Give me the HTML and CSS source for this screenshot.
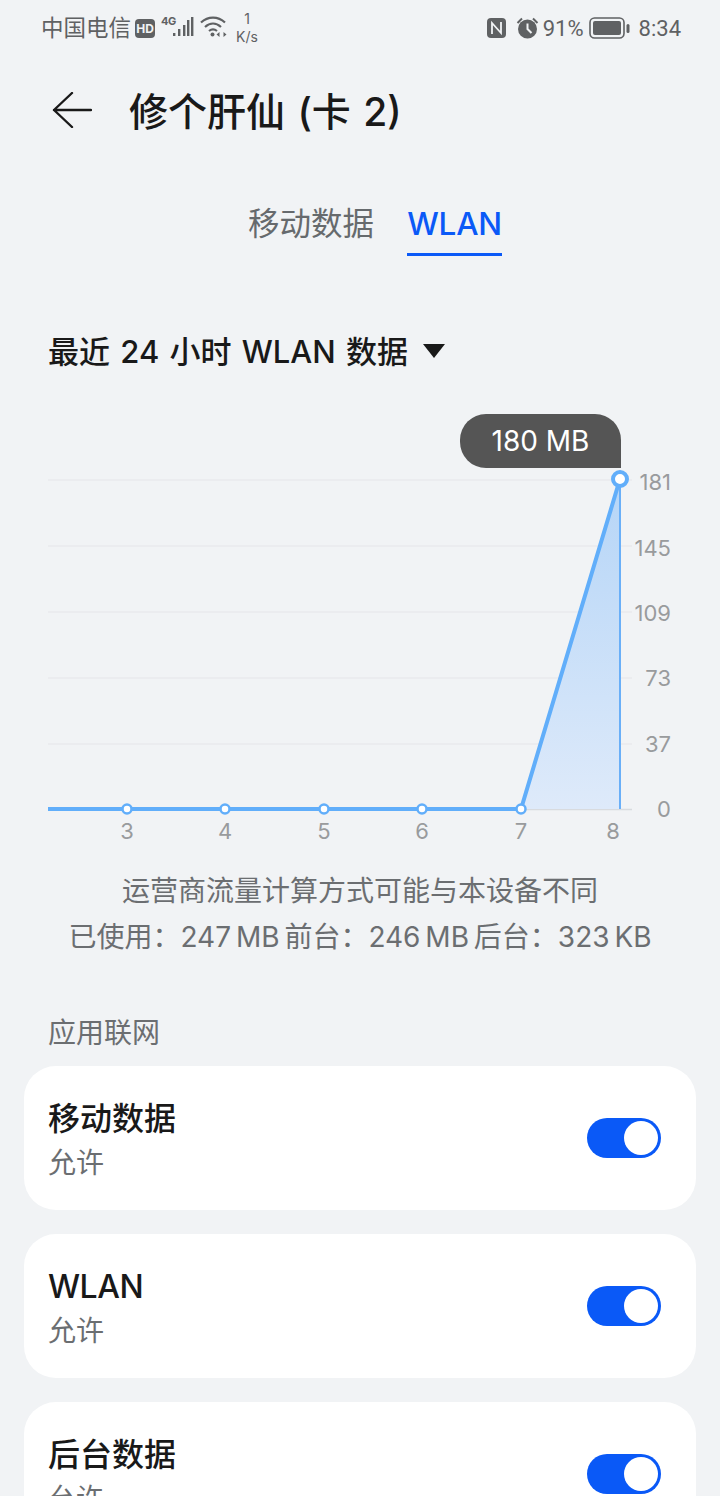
FILE: index.html
```html
<!DOCTYPE html>
<html lang="zh-CN">
<head>
    <meta charset="UTF-8">
    <meta name="viewport" content="width=device-width, initial-scale=1.0">
    <title>修个肝仙 (卡 2)</title>
    <link rel="stylesheet" href="styles.css">
</head>
<body>

    <div class="status-bar">
        <div class="status-left">
            <span class="carrier">中国电信</span>
            <svg class="icon-hd" width="21" height="20" viewBox="0 0 21 20">
                <rect x="1" y="1" width="20" height="19" rx="4" fill="#5f6163"/>
                <text x="11" y="15" text-anchor="middle" class="hd-text">HD</text>
            </svg>
            <svg class="icon-signal" width="34" height="24" viewBox="0 0 34 24">
                <text x="0" y="11" class="net-text">4G</text>
                <rect x="12" y="19" width="2.4" height="3" fill="#5f6163"/>
                <rect x="17" y="15" width="2.4" height="7" fill="#5f6163"/>
                <rect x="22" y="11" width="2.4" height="11" fill="#5f6163"/>
                <rect x="26" y="6" width="2.4" height="16" fill="#5f6163"/>
                <rect x="30" y="3" width="2.4" height="19" fill="#5f6163"/>
            </svg>
            <svg class="icon-wifi" width="28" height="24" viewBox="0 0 28 24" fill="none" stroke="#5f6163" stroke-width="2.2">
                <path d="M1 7.500C8 1 18 1 25 7.500"/>
                <path d="M5 12C10 7.500 16 7.500 21 12"/>
                <path d="M9 16C11.500 14 14.500 14 17 16"/>
                <circle cx="12.500" cy="19.500" r="2" fill="#5f6163" stroke="none"/>
                <path d="M16.500 19.500l3-2.500v5zM26.500 19.500l-3-2.500v5z" fill="#5f6163" stroke="none"/>
            </svg>
            <div class="speed"><span>1</span><span>K/s</span></div>
        </div>
        <div class="status-right">
            <svg class="icon-nfc" width="21" height="22" viewBox="0 0 21 22">
                <rect x="1" y="1" width="19" height="20" rx="4" fill="#5f6163"/>
                <path d="M6 17V6l9 10V5" fill="none" stroke="#f1f3f5" stroke-width="1.800"/>
            </svg>
            <svg class="icon-alarm" width="23" height="22" viewBox="0 0 23 22">
                <circle cx="11.500" cy="12" r="9.500" fill="#5f6163"/>
                <path d="M11.500 6.500V12l4 4" fill="none" stroke="#f1f3f5" stroke-width="2"/>
                <path d="M1.500 6L6 1.500M21.500 6L17 1.500" fill="none" stroke="#5f6163" stroke-width="2"/>
            </svg>
            <span class="battery-pct">91%</span>
            <svg class="icon-battery" width="41" height="22" viewBox="0 0 41 22">
                <rect x="1" y="1" width="34" height="20" rx="4.500" fill="none" stroke="#5f6163" stroke-width="1.600"/>
                <rect x="4" y="4" width="28" height="14" rx="2" fill="#5f6163"/>
                <rect x="37.500" y="7" width="3" height="9" rx="1.500" fill="#5f6163"/>
            </svg>
            <span class="clock">8:34</span>
        </div>
    </div>

    <div class="title-bar">
        <svg class="back-icon" width="40" height="36" viewBox="0 0 40 36" fill="none" stroke="#191919" stroke-width="2.400" stroke-linecap="round" stroke-linejoin="round">
            <path d="M39 18H2M20 1L2 18l18 17"/>
        </svg>
        <h1>修个肝仙 (卡 2)</h1>
    </div>

    <div class="tabs">
        <div class="tab">移动数据</div>
        <div class="tab tab-active">WLAN</div>
    </div>

    <div class="range-picker">
        <span>最近 24 小时 WLAN 数据</span>
        <span class="caret"></span>
    </div>

    <div class="chart">
        <div class="chart-tip">180 MB</div>
        <svg class="chart-svg" width="720" height="440" viewBox="0 0 720 440">
            <defs>
                <linearGradient id="areaFill" x1="0" y1="0" x2="0" y2="1">
                    <stop offset="0" stop-color="#b5d5f7"/>
                    <stop offset="1" stop-color="#deeafa"/>
                </linearGradient>
            </defs>
            <g class="grid">
                <line x1="48" x2="632" y1="70" y2="70"/>
                <line x1="48" x2="632" y1="136" y2="136"/>
                <line x1="48" x2="632" y1="202" y2="202"/>
                <line x1="48" x2="632" y1="268" y2="268"/>
                <line x1="48" x2="632" y1="334" y2="334"/>
                <line x1="48" x2="632" y1="399.500" y2="399.500" class="baseline"/>
            </g>
            <path d="M521 399L620 69V399Z" fill="url(#areaFill)"/>
            <line x1="620" x2="620" y1="69" y2="399" class="drop-line"/>
            <path d="M48 399H521L620 69" class="data-line"/>
            <g class="points">
                <circle cx="127" cy="399" r="4.500"/>
                <circle cx="225" cy="399" r="4.500"/>
                <circle cx="324" cy="399" r="4.500"/>
                <circle cx="422" cy="399" r="4.500"/>
                <circle cx="521" cy="399" r="4.500"/>
                <circle cx="620" cy="69" r="7" class="point-last"/>
            </g>
            <g class="y-labels">
                <text x="671" y="80">181</text>
                <text x="671" y="146">145</text>
                <text x="671" y="211">109</text>
                <text x="671" y="276">73</text>
                <text x="671" y="342">37</text>
                <text x="671" y="407">0</text>
            </g>
            <g class="x-labels">
                <text x="127" y="429">3</text>
                <text x="225" y="429">4</text>
                <text x="324" y="429">5</text>
                <text x="422" y="429">6</text>
                <text x="521" y="429">7</text>
                <text x="613" y="429">8</text>
            </g>
        </svg>
    </div>

    <div class="usage-note">
        <p>运营商流量计算方式可能与本设备不同</p>
        <p>已使用：247 MB 前台：246 MB 后台：323 KB</p>
    </div>

    <div class="section-label">应用联网</div>

    <div class="card-list">
        <div class="card">
            <div class="card-text">
                <div class="card-title">移动数据</div>
                <div class="card-sub">允许</div>
            </div>
            <div class="switch"><span class="knob"></span></div>
        </div>
        <div class="card">
            <div class="card-text">
                <div class="card-title card-title-latin">WLAN</div>
                <div class="card-sub">允许</div>
            </div>
            <div class="switch"><span class="knob"></span></div>
        </div>
        <div class="card">
            <div class="card-text">
                <div class="card-title">后台数据</div>
                <div class="card-sub">允许</div>
            </div>
            <div class="switch"><span class="knob"></span></div>
        </div>
    </div>

</body>
</html>
```

FILE: styles.css
```css
html, body {
    height: 1496px;
    overflow: hidden;
}
body {
    margin: 0;
    background-color: #f1f3f5;
    font-family: Inter, "Noto Sans CJK SC", sans-serif;
    color: #191919;
}
.status-bar {
    height: 56px;
    padding: 0 39px 0 41px;
    display: flex;
    justify-content: space-between;
    align-items: center;
    color: #5f6163;
}
.status-left,
.status-right {
    display: flex;
    align-items: center;
}
.carrier {
    font-size: 22.5px;
    margin-bottom: 4px;
}
.icon-hd {
    margin-left: 3px;
}
.hd-text {
    font-size: 12px;
    font-weight: 700;
    fill: #f1f3f5;
}
.net-text {
    font-size: 11px;
    font-weight: 700;
    letter-spacing: -0.5px;
    fill: #5f6163;
}
.icon-signal {
    margin-left: 6px;
    margin-bottom: 4px;
}
.icon-wifi {
    margin-left: 5px;
    margin-bottom: 2px;
}
.speed {
    margin-left: 6px;
    width: 26px;
    display: flex;
    flex-direction: column;
    align-items: center;
    font-size: 14px;
    line-height: 18px;
}
.status-right {
    gap: 4px;
    font-family: Roboto, sans-serif;
}
.icon-nfc {
    margin-right: 5px;
}
.battery-pct,
.clock {
    font-size: 22px;
}
.icon-battery {
    margin-left: 1px;
}
.clock {
    margin-left: 5px;
}
.title-bar {
    height: 80px;
    padding-left: 52px;
    margin-top: 16px;
    display: flex;
    align-items: center;
}
.back-icon {
    margin-bottom: 4px;
}
.title-bar h1 {
    margin: 0 0 0 37px;
    font-size: 39px;
    font-weight: 500;
    line-height: 44px;
    word-spacing: 2px;
}
.tabs {
    margin-top: 45px;
    padding-left: 30px;
    display: flex;
    justify-content: center;
    gap: 33px;
    font-size: 31.5px;
    color: #666a6d;
}
.tab {
    height: 59px;
    padding-top: 8px;
    box-sizing: border-box;
    line-height: 38px;
}
.tab-active {
    color: #0a59f7;
    font-weight: 500;
    letter-spacing: -0.2px;
    border-bottom: 3px solid #0a59f7;
}
.range-picker {
    margin-top: 76px;
    padding-left: 48px;
    display: flex;
    align-items: center;
    gap: 15px;
    font-size: 31px;
    font-weight: 500;
    line-height: 40px;
    word-spacing: 2px;
}
.caret {
    width: 0;
    height: 0;
    border-left: 11px solid transparent;
    border-right: 11px solid transparent;
    border-top: 14px solid #191919;
    margin-bottom: 2px;
}
.chart {
    position: relative;
    height: 440px;
    margin-top: 38px;
}
.chart-svg {
    display: block;
}
.chart-tip {
    position: absolute;
    left: 460px;
    top: 4px;
    width: 161px;
    height: 54px;
    border-radius: 26px 26px 0 26px;
    background-color: #555555;
    color: #ffffff;
    font-size: 28px;
    line-height: 54px;
    text-align: center;
}
.grid line {
    stroke: #e8eaec;
    stroke-width: 1.500;
}
.grid .baseline {
    stroke: #d8dbdf;
}
.drop-line {
    stroke: #69aff8;
    stroke-width: 2;
}
.data-line {
    fill: none;
    stroke: #61aefa;
    stroke-width: 4;
}
.points circle {
    fill: #ffffff;
    stroke: #61aefa;
    stroke-width: 2.500;
}
.points .point-last {
    stroke-width: 4;
}
.y-labels text {
    font-size: 22px;
    fill: #999b9d;
    text-anchor: end;
}
.x-labels text {
    font-size: 22px;
    fill: #999b9d;
    text-anchor: middle;
}
.usage-note {
    margin-top: 18px;
    text-align: center;
    font-size: 28px;
    line-height: 46px;
    color: #6b6e71;
    word-spacing: -3px;
}
.usage-note p {
    margin: 0;
}
.section-label {
    margin-top: 55px;
    padding-left: 48px;
    font-size: 28px;
    line-height: 36px;
    color: #6b6e71;
}
.card-list {
    margin-top: 15px;
    padding: 0 24px;
    display: flex;
    flex-direction: column;
    gap: 24px;
}
.card {
    height: 144px;
    padding: 0 35px 0 24px;
    flex-shrink: 0;
    box-sizing: border-box;
    border-radius: 32px;
    background-color: #ffffff;
    display: flex;
    justify-content: space-between;
    align-items: center;
}
.card-text {
    padding-top: 2px;
}
.card-title {
    font-size: 32px;
    font-weight: 500;
    line-height: 44px;
}
.card-title-latin {
    letter-spacing: -0.5px;
}
.card-sub {
    margin-top: 4px;
    font-size: 28px;
    line-height: 36px;
    color: #6b6e71;
}
.switch {
    width: 74px;
    height: 40px;
    padding: 3px;
    box-sizing: border-box;
    border-radius: 20px;
    background-color: #0a59f7;
    display: flex;
    justify-content: flex-end;
}
.knob {
    width: 34px;
    height: 34px;
    border-radius: 50%;
    background-color: #ffffff;
}
```
